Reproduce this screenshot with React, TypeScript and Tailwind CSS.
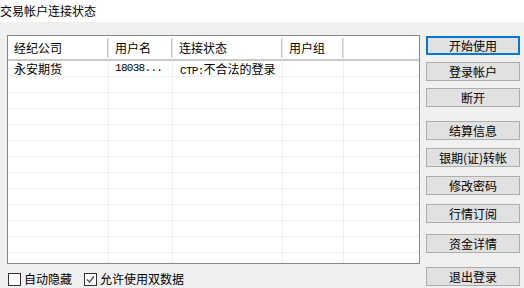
import React from 'react';

const cols = [
  { title: '经纪公司', w: 'w-[101px]' },
  { title: '用户名', w: 'w-[64px]' },
  { title: '连接状态', w: 'w-[110px]' },
  { title: '用户组', w: 'w-[61px]' },
];

const buttons = [
  { label: '开始使用', mt: 'mt-[14px]', primary: true },
  { label: '登录帐户', mt: 'mt-[7px]' },
  { label: '断开', mt: 'mt-[7px]' },
  { label: '结算信息', mt: 'mt-[14px]' },
  { label: '银期(证)转帐', mt: 'mt-[8px]' },
  { label: '修改密码', mt: 'mt-[9px]' },
  { label: '行情订阅', mt: 'mt-[9px]' },
  { label: '资金详情', mt: 'mt-[11px]' },
  { label: '退出登录', mt: 'mt-[14px]' },
];

const font = "font-['Microsoft_YaHei','Noto_Sans_CJK_SC',sans-serif]";
const mono = "font-['Liberation_Mono','Noto_Sans_CJK_SC',monospace]";

function Checkbox({ checked, label }: { checked?: boolean; label: string }) {
  return (
    <label className="flex items-center gap-[3px]">
      <span className="w-[13px] h-[13px] border border-[#333333] bg-white flex items-center justify-center">
        {checked && (
          <svg width="9" height="9" viewBox="0 0 9 9">
            <path d="M1 4.5 L3.5 7 L8 1.5" fill="none" stroke="#4a4a4a" strokeWidth="1.2" />
          </svg>
        )}
      </span>
      <span className="text-[12px] leading-[14px] text-black">{label}</span>
    </label>
  );
}

export default function App() {
  const rows = Array.from({ length: 13 });

  return (
    <div className={`w-[524px] h-[288px] bg-[#f0f0f0] overflow-hidden flex flex-col ${font}`}>
      {/* title */}
      <div className="h-[22px] bg-white flex items-center">
        <span className="text-[12px] leading-[14px] text-black">交易帐户连接状态</span>
      </div>

      <div className="flex">
        {/* left */}
        <div className="flex flex-col pl-[7px]">
          <div className="mt-[13px] w-[413px] h-[229px] border border-[#828790] bg-white overflow-hidden flex flex-col">
            {/* header */}
            <div className="flex h-[25px] shrink-0 border-b-2 border-[#c8c8c8]">
              {cols.map((c) => (
                <div key={c.title} className={`${c.w} flex items-center justify-between`}>
                  <span className="pl-[6px] text-[12px] leading-[14px] text-black">{c.title}</span>
                  <span className="flex h-[20px]">
                    <span className="w-px bg-[#c8c8c8]" />
                    <span className="w-px bg-[#e5e5e5]" />
                  </span>
                </div>
              ))}
              <div className="flex-1" />
            </div>
            {rows.map((_, i) => (
              <div key={i} className="flex h-[16px] shrink-0 border-b border-[#f0f0f0]">
                <div className={`${cols[0].w} border-r border-[#f0f0f0] pl-[6px] text-[12px] leading-[15px] text-black`}>
                  {i === 0 ? '永安期货' : ''}
                </div>
                <div className={`${cols[1].w} border-r border-[#f0f0f0] pl-[6px] text-[11px] tracking-[-0.7px] leading-[15px] text-black ${mono}`}>
                  {i === 0 ? '18038...' : ''}
                </div>
                <div className={`${cols[2].w} border-r border-[#f0f0f0] pl-[7px] text-[12px] leading-[15px] text-black whitespace-nowrap`}>
                  {i === 0 ? (
                    <>
                      <span className={`text-[11px] tracking-[-0.7px] ${mono}`}>CTP:</span>不合法的登录
                    </>
                  ) : (
                    ''
                  )}
                </div>
                <div className={`${cols[3].w} border-r border-[#f0f0f0]`} />
                <div className="flex-1" />
              </div>
            ))}
          </div>

          <div className="mt-[8px] flex items-center pl-px">
            <Checkbox label="自动隐藏" />
            <div className="ml-[12px]">
              <Checkbox checked label="允许使用双数据" />
            </div>
          </div>
        </div>

        {/* right buttons */}
        <div className="flex flex-col pl-[6px]">
          {buttons.map((b) => (
            <button
              key={b.label}
              className={`${b.mt} w-[94px] h-[19px] bg-[#e1e1e1] flex items-center justify-center text-[12px] leading-[14px] text-black ${
                b.primary ? 'border-2 border-[#0078d7]' : 'border border-[#adadad]'
              }`}
            >
              {b.label}
            </button>
          ))}
        </div>
      </div>
    </div>
  );
}
